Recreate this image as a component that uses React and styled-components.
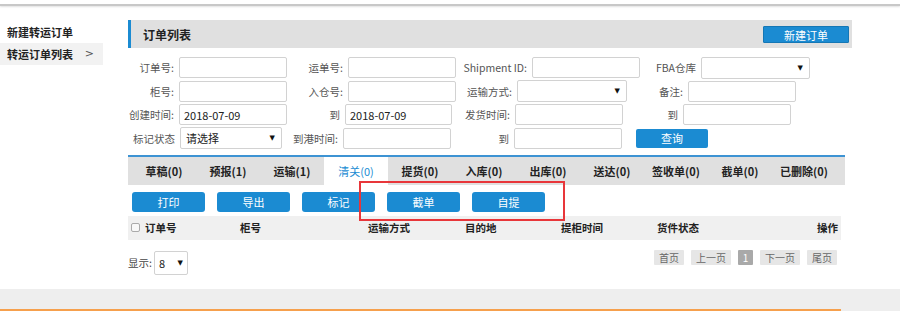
import React from "react";
import styled, { createGlobalStyle } from "styled-components";

const GlobalStyle = createGlobalStyle`
  html, body {
    margin: 0;
    padding: 0;
    background: #fff;
  }
  body {
    font-family: "Noto Sans CJK SC", "Noto Sans", "Liberation Sans", sans-serif;
    font-size: 11px;
    color: #333;
  }
`;

const BLUE = "#1b8bd2";

const formRows = [
  [
    { label: "订单号:", lw: 51, w: 108 },
    { label: "运单号:", lw: 61, w: 108 },
    { label: "Shipment ID:", lw: 76, w: 108 },
    { label: "FBA仓库", lw: 61, w: 109, select: true },
  ],
  [
    { label: "柜号:", lw: 51, w: 108 },
    { label: "入仓号:", lw: 61, w: 108 },
    { label: "运输方式:", lw: 61, w: 110, select: true },
    { label: "备注:", lw: 61, w: 108 },
  ],
  [
    { label: "创建时间:", lw: 51, w: 108, value: "2018-07-09" },
    { label: "到", lw: 58, w: 107, value: "2018-07-09" },
    { label: "发货时间:", lw: 63, w: 108 },
    { label: "到", lw: 60, w: 108 },
  ],
  [
    { label: "标记状态", lw: 52, w: 102, select: true, value: "请选择" },
    { label: "到港时间:", lw: 61, w: 108 },
    { label: "到", lw: 63, w: 108 },
  ],
];

const tabs = [
  "草稿(0)",
  "预报(1)",
  "运输(1)",
  "清关(0)",
  "提货(0)",
  "入库(0)",
  "出库(0)",
  "送达(0)",
  "签收单(0)",
  "截单(0)",
  "已删除(0)",
];

const actions = ["打印", "导出", "标记", "截单", "自提"];

const columns = ["柜号", "运输方式", "目的地", "提柜时间", "货件状态"];

const pages = [
  { text: "首页" },
  { text: "上一页" },
  { text: "1", current: true },
  { text: "下一页" },
  { text: "尾页" },
];

function App() {
  return (
    <>
      <GlobalStyle />
      <TopBar />
      <Body>
        <Sidebar>
          <SideItem>新建转运订单</SideItem>
          <SideItem $active>
            转运订单列表
            <Chevron>&gt;</Chevron>
          </SideItem>
        </Sidebar>

        <Main>
          <PanelHeader>
            <Title>订单列表</Title>
            <HeaderButton>新建订单</HeaderButton>
          </PanelHeader>

          <Form>
            {formRows.map((row, i) => (
              <FormRow key={i}>
                {row.map((f, j) => (
                  <React.Fragment key={j}>
                    <Label $w={f.lw}>{f.label}</Label>
                    {f.select ? (
                      <SelectBox $w={f.w}>
                        <span>{f.value || ""}</span>
                        <Arrow>▼</Arrow>
                      </SelectBox>
                    ) : (
                      <Input $w={f.w} defaultValue={f.value || ""} />
                    )}
                  </React.Fragment>
                ))}
                {i === 3 && <QueryButton>查询</QueryButton>}
              </FormRow>
            ))}
          </Form>

          <Tabs>
            {tabs.map((t, i) => (
              <Tab key={t} $active={i === 3}>
                {t}
              </Tab>
            ))}
          </Tabs>

          <Actions>
            {actions.map(a => (
              <ActionButton key={a}>{a}</ActionButton>
            ))}
          </Actions>

          <TableHead>
            <HeadCell>
              <Check />
              订单号
            </HeadCell>
            {columns.map(c => (
              <HeadCell key={c}>{c}</HeadCell>
            ))}
            <HeadCell $right>操作</HeadCell>
          </TableHead>

          <Pager>
            <PageSize>
              显示:
              <SizeSelect>
                <span>8</span>
                <Arrow>▼</Arrow>
              </SizeSelect>
            </PageSize>
            <PageLinks>
              {pages.map(p => (
                <PageButton key={p.text} $current={p.current}>
                  {p.text}
                </PageButton>
              ))}
            </PageLinks>
          </Pager>

          {/* annotation drawn over the screenshot */}
          <Highlight />
        </Main>
      </Body>
      <Footer>
        <FooterLine />
      </Footer>
    </>
  );
}

const TopBar = styled("div")`
  height: 4px;
  border-bottom: 2px solid #c8c8c8;
  box-shadow: 0 1px 2px rgba(0, 0, 0, 0.12);
`;

const Body = styled("div")`
  display: flex;
  align-items: flex-start;
`;

const Sidebar = styled("div")`
  width: 103px;
  margin-right: 25px;
  padding-top: 15px;
`;

const SideItem = styled("div")`
  position: relative;
  height: 22px;
  line-height: 22px;
  padding-left: 7px;
  font-weight: bold;
  color: #222;
  background: ${p => (p.$active ? "#f2f2f2" : "transparent")};
`;

const Chevron = styled("span")`
  position: absolute;
  right: 9px;
  top: 0;
  font-weight: normal;
  font-family: "DejaVu Sans", sans-serif;
  font-size: 11px;
  color: #555;
`;

const Main = styled("div")`
  position: relative;
  width: 724px;
  padding-top: 14px;
`;

const PanelHeader = styled("div")`
  height: 28px;
  background: #e0e0e0;
  border-left: 3px solid ${BLUE};
  display: flex;
  align-items: center;
  justify-content: space-between;
  padding: 0 3px 0 12px;
`;

const Title = styled("div")`
  font-size: 12px;
  font-weight: bold;
  color: #222;
`;

const HeaderButton = styled("div")`
  width: 86px;
  height: 17px;
  line-height: 17px;
  text-align: center;
  color: #fff;
  background: ${BLUE};
  border: 1px solid #1577b5;
  box-sizing: border-box;
  border-radius: 1px;
  font-size: 11px;
`;

const Form = styled("div")`
  display: flex;
  flex-direction: column;
  gap: 2.5px;
  margin-top: 9px;
`;

const FormRow = styled("div")`
  display: flex;
  align-items: center;
  height: 21px;
`;

const Label = styled("div")`
  width: ${p => p.$w}px;
  padding-right: 5px;
  box-sizing: border-box;
  text-align: right;
  white-space: nowrap;
  color: #555;
  font-size: 10.5px;
`;

const Input = styled("input")`
  width: ${p => p.$w}px;
  height: 21px;
  box-sizing: border-box;
  border: 1px solid #d2d2d2;
  border-radius: 2px;
  padding: 0 4px;
  font-family: inherit;
  font-size: 11px;
  color: #222;
  outline: none;
`;

const SelectBox = styled("div")`
  width: ${p => p.$w}px;
  height: 22px;
  box-sizing: border-box;
  border: 1px solid #d2d2d2;
  border-radius: 2px;
  padding: 0 6px 0 5px;
  display: flex;
  align-items: center;
  justify-content: space-between;
  font-size: 11px;
  color: #222;
  background: #fff;
`;

const Arrow = styled("span")`
  font-family: "DejaVu Sans", sans-serif;
  font-size: 7px;
  color: #111;
`;

const QueryButton = styled("div")`
  margin-left: 14px;
  width: 72px;
  height: 19px;
  line-height: 19px;
  text-align: center;
  color: #fff;
  background: ${BLUE};
  border-radius: 2px;
  font-size: 11px;
`;

const Tabs = styled("div")`
  width: 713px;
  margin-top: 6px;
  height: 28px;
  border-top: 2px solid #3d93d3;
  background: #e0e0e0;
  display: flex;
  padding-left: 4px;
  box-sizing: content-box;
`;

const Tab = styled("div")`
  width: 64px;
  line-height: 28px;
  text-align: center;
  font-size: 11px;
  color: ${p => (p.$active ? BLUE : "#222")};
  background: ${p => (p.$active ? "#fff" : "transparent")};
  font-weight: ${p => (p.$active ? "normal" : "bold")};
`;

const Actions = styled("div")`
  display: flex;
  gap: 12px;
  padding-left: 4px;
  margin-top: 7px;
`;

const ActionButton = styled("div")`
  width: 73px;
  height: 20px;
  line-height: 20px;
  text-align: center;
  color: #fff;
  background: ${BLUE};
  border-radius: 3px;
  font-size: 11px;
`;

const TableHead = styled("div")`
  width: 713px;
  margin-top: 4px;
  height: 24px;
  background: #f0f0f0;
  display: grid;
  grid-template-columns: 112px 128px 97px 96px 96px 1fr auto;
  align-items: center;
  padding-right: 3px;
  box-sizing: border-box;
`;

const HeadCell = styled("div")`
  display: flex;
  align-items: center;
  font-weight: bold;
  font-size: 10.5px;
  color: #222;
  justify-content: ${p => (p.$right ? "flex-end" : "flex-start")};
`;

const Check = styled("span")`
  width: 7px;
  height: 7px;
  margin: 0 5px 0 3px;
  border: 1px solid #aaa;
  border-radius: 2px;
  background: #f8f8f8;
`;

const Pager = styled("div")`
  width: 713px;
  display: flex;
  justify-content: space-between;
  align-items: flex-start;
  margin-top: 11px;
  padding-right: 4px;
  box-sizing: border-box;
`;

const PageSize = styled("div")`
  display: flex;
  align-items: center;
  gap: 2px;
  color: #444;
  font-size: 10.5px;
`;

const SizeSelect = styled("div")`
  width: 34px;
  height: 24px;
  box-sizing: border-box;
  border: 1px solid #d2d2d2;
  border-radius: 2px;
  padding: 0 4px;
  display: flex;
  align-items: center;
  justify-content: space-between;
  font-size: 11px;
  color: #222;
`;

const PageLinks = styled("div")`
  display: flex;
  gap: 7px;
  margin-top: -1px;
`;

const PageButton = styled("div")`
  height: 15px;
  line-height: 15px;
  padding: 0 ${p => (p.$current ? 4 : 5)}px;
  min-width: ${p => (p.$current ? 7 : 0)}px;
  text-align: center;
  font-size: 10px;
  color: ${p => (p.$current ? "#fff" : "#666")};
  background: ${p => (p.$current ? "#a9a9a9" : "#e6e6e6")};
  border-radius: 1px;
`;

const Highlight = styled("div")`
  position: absolute;
  left: 231px;
  top: 175px;
  width: 206px;
  height: 40px;
  box-sizing: border-box;
  border: 2px solid #e8363a;
`;

const Footer = styled("div")`
  margin-top: 14px;
  height: 22px;
  background: #eeeeee;
  display: flex;
  align-items: flex-end;
`;

const FooterLine = styled("div")`
  width: 841px;
  height: 2px;
  background: #f6a04d;
`;

export default App;
